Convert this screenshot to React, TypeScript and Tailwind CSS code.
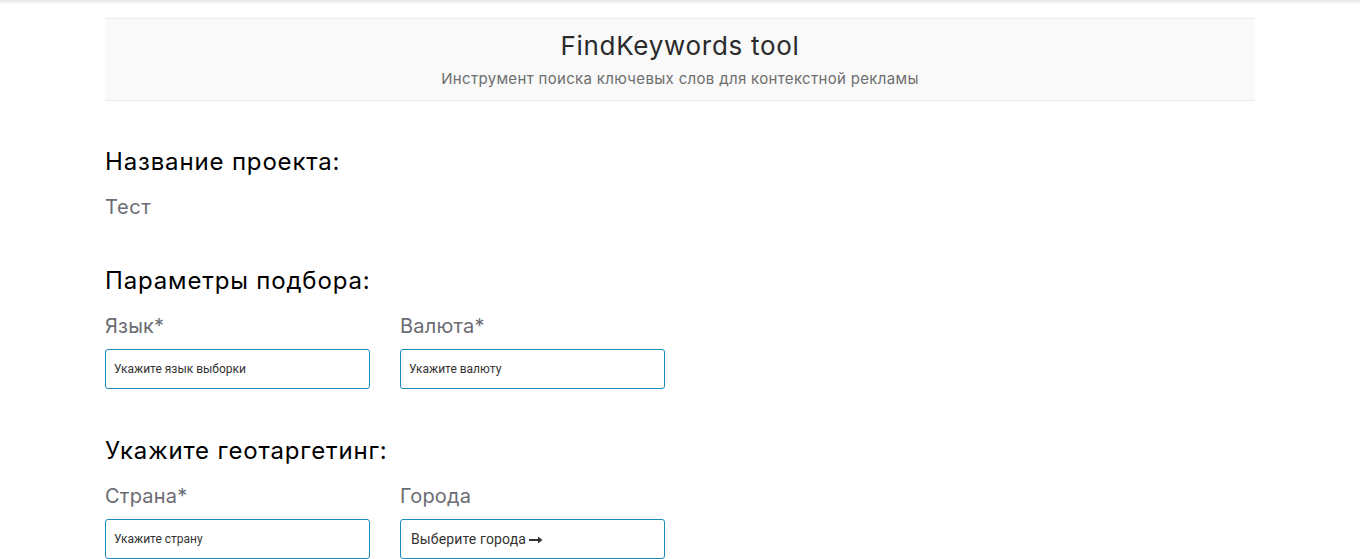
import React from 'react';

const Field: React.FC<{ label: string; placeholder: string; button?: boolean }> = ({ label, placeholder, button }) => (
  <div className="w-[265px]">
    <div className="text-[20px] leading-[24px] text-[#6c6c74] mt-[18px] font-['Inter',sans-serif] tracking-[0.01em]">{label}</div>
    <div className="mt-[11px] h-[40px] border border-[#1a8cbf] rounded-[3px] flex items-center px-[8px]">
      {button ? (
        <span className="text-[14px] text-[#333] pl-[2px] flex items-center gap-[3px] tracking-[0.01em]">
          Выберите города
          <svg width="14" height="8" viewBox="0 0 14 8" className="mt-[1px]">
            <path d="M0 4h10" stroke="#333" strokeWidth="2" />
            <path d="M9 0.5L13.5 4 9 7.5z" fill="#333" />
          </svg>
        </span>
      ) : (
        <span className="text-[12px] text-[#333]">{placeholder}</span>
      )}
    </div>
  </div>
);

const Heading: React.FC<{ children: React.ReactNode; className?: string }> = ({ children, className }) => (
  <h2 className={`text-[24px] leading-[30px] text-black font-['Inter',sans-serif] tracking-[0.035em] ${className ?? ''}`}>{children}</h2>
);

const App: React.FC = () => {
  return (
    <div className="min-h-[559px] bg-white relative" style={{ fontFamily: 'Roboto, "Open Sans", sans-serif' }}>
      <div className="absolute top-0 left-0 right-0 h-[4px] bg-gradient-to-b from-[#e6e6e6] to-white" />
      <div className="w-[1150px] ml-[105px] pt-[18px]">
        <div className="h-[83px] bg-[#f9f9f9] border-y border-[#ececec] flex flex-col items-center pt-[11px] font-['Inter',sans-serif]">
          <h1 className="text-[26px] leading-[32px] text-[#2a2a2a] tracking-[0.027em]">FindKeywords tool</h1>
          <p className="mt-[7px] text-[15px] leading-[20px] text-[#6e6e6e] tracking-[0.022em]">Инструмент поиска ключевых слов для контекстной рекламы</p>
        </div>

        <Heading className="mt-[46px]">Название проекта:</Heading>
        <div className="mt-[18px] text-[20px] leading-[24px] text-[#6c6c74] font-['Inter',sans-serif] tracking-[0.03em]">Тест</div>

        <Heading className="mt-[47px]">Параметры подбора:</Heading>
        <div className="flex gap-[30px]">
          <Field label="Язык*" placeholder="Укажите язык выборки" />
          <Field label="Валюта*" placeholder="Укажите валюту" />
        </div>

        <Heading className="mt-[47px]">Укажите геотаргетинг:</Heading>
        <div className="flex gap-[30px]">
          <Field label="Страна*" placeholder="Укажите страну" />
          <Field label="Города" placeholder="" button />
        </div>
      </div>
    </div>
  );
};

export default App;
